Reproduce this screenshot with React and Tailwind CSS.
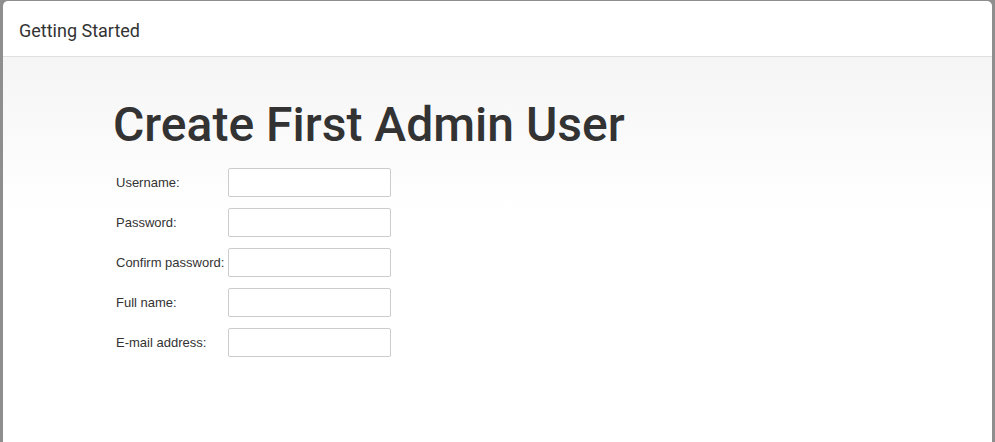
const fields = ['Username:', 'Password:', 'Confirm password:', 'Full name:', 'E-mail address:']

export default function App() {
  return (
    <div className="h-[442px] w-[995px] overflow-hidden bg-[#8e8e8e] pt-[1px] pl-[3px] pr-[3px]">
      <div className="flex h-full flex-col overflow-hidden rounded-t-[5px] bg-white">
        {/* Header */}
        <div className="flex h-[56px] shrink-0 items-center border-b border-[#e0e0e0] px-[16px] pt-[3px]">
          <h2 className="text-[18px] font-normal text-[#333]" style={{ fontFamily: 'Roboto, sans-serif' }}>
            Getting Started
          </h2>
        </div>

        {/* Body */}
        <div className="flex-1 bg-gradient-to-b from-[#f5f5f5] to-white to-[40%] pl-[107px] pt-[40px]">
          <h1
            className="ml-[3px] text-[48px] font-medium leading-[56px] text-[#333]"
            style={{ fontFamily: 'Roboto, sans-serif' }}
          >
            Create First Admin User
          </h1>
          <div className="mt-[15px] flex flex-col gap-[11px] pl-[3px]">
            {fields.map((f) => (
              <div key={f} className="flex items-center">
                <label
                  className="w-[115px] pl-[3px] text-[13px] text-[#333]"
                  style={{ fontFamily: '"Liberation Sans", Arial, sans-serif' }}
                >
                  {f}
                </label>
                <input
                  type={f.includes('assword') ? 'password' : 'text'}
                  className="h-[29px] w-[163px] rounded-[2px] border border-[#ccc] bg-white outline-none"
                />
              </div>
            ))}
          </div>
        </div>
      </div>
    </div>
  )
}
